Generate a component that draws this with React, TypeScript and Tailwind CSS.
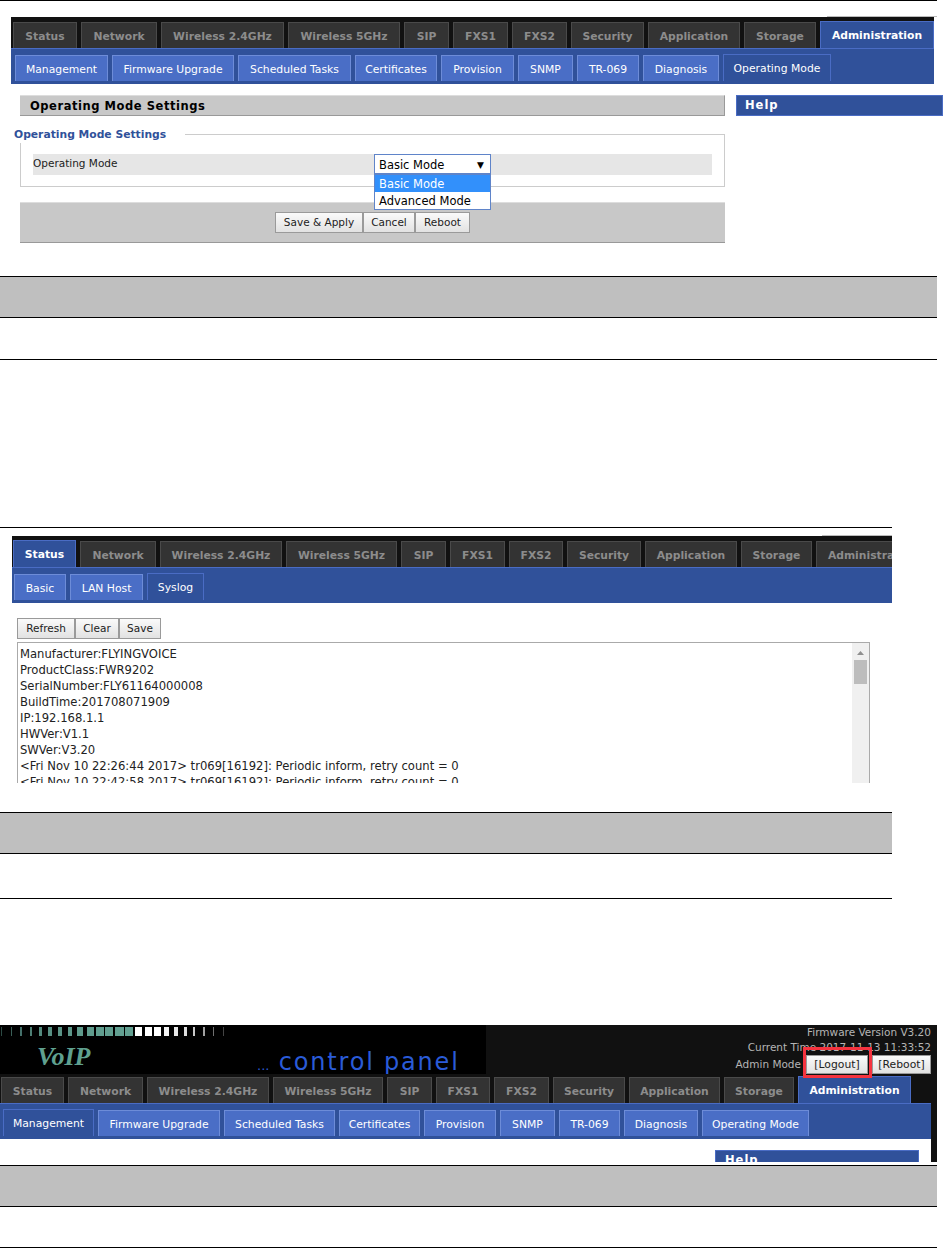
type Item = { label: string; width: string; active?: boolean };

const tabsA: Item[] = [
  { label: "Status", width: "w-[64px]" },
  { label: "Network", width: "w-[76px]" },
  { label: "Wireless 2.4GHz", width: "w-[123px]" },
  { label: "Wireless 5GHz", width: "w-[112px]" },
  { label: "SIP", width: "w-[45px]" },
  { label: "FXS1", width: "w-[55px]" },
  { label: "FXS2", width: "w-[55px]" },
  { label: "Security", width: "w-[73px]" },
  { label: "Application", width: "w-[92px]" },
  { label: "Storage", width: "w-[72px]" },
  { label: "Administration", width: "w-[114px]", active: true },
];

const tabsB: Item[] = [
  { label: "Status", width: "w-[63px]", active: true },
  { label: "Network", width: "w-[76px]" },
  { label: "Wireless 2.4GHz", width: "w-[122px]" },
  { label: "Wireless 5GHz", width: "w-[111px]" },
  { label: "SIP", width: "w-[45px]" },
  { label: "FXS1", width: "w-[55px]" },
  { label: "FXS2", width: "w-[54px]" },
  { label: "Security", width: "w-[74px]" },
  { label: "Application", width: "w-[92px]" },
  { label: "Storage", width: "w-[71px]" },
  { label: "Administration", width: "w-[114px]" },
];

const tabsC: Item[] = [
  { label: "Status", width: "w-[63px]" },
  { label: "Network", width: "w-[75px]" },
  { label: "Wireless 2.4GHz", width: "w-[122px]" },
  { label: "Wireless 5GHz", width: "w-[110px]" },
  { label: "SIP", width: "w-[45px]" },
  { label: "FXS1", width: "w-[54px]" },
  { label: "FXS2", width: "w-[55px]" },
  { label: "Security", width: "w-[72px]" },
  { label: "Application", width: "w-[91px]" },
  { label: "Storage", width: "w-[70px]" },
  { label: "Administration", width: "w-[113px]", active: true },
];

const subsA: Item[] = [
  { label: "Management", width: "w-[93px]" },
  { label: "Firmware Upgrade", width: "w-[122px]" },
  { label: "Scheduled Tasks", width: "w-[113px]" },
  { label: "Certificates", width: "w-[82px]" },
  { label: "Provision", width: "w-[73px]" },
  { label: "SNMP", width: "w-[55px]" },
  { label: "TR-069", width: "w-[62px]" },
  { label: "Diagnosis", width: "w-[76px]" },
  { label: "Operating Mode", width: "w-[108px]", active: true },
];

const subsB: Item[] = [
  { label: "Basic", width: "w-[52px]" },
  { label: "LAN Host", width: "w-[73px]" },
  { label: "Syslog", width: "w-[57px]", active: true },
];

const subsC: Item[] = [
  { label: "Management", width: "w-[91px]", active: true },
  { label: "Firmware Upgrade", width: "w-[122px]" },
  { label: "Scheduled Tasks", width: "w-[111px]" },
  { label: "Certificates", width: "w-[81px]" },
  { label: "Provision", width: "w-[72px]" },
  { label: "SNMP", width: "w-[55px]" },
  { label: "TR-069", width: "w-[61px]" },
  { label: "Diagnosis", width: "w-[74px]" },
  { label: "Operating Mode", width: "w-[107px]" },
];

const logLines = [
  "Manufacturer:FLYINGVOICE",
  "ProductClass:FWR9202",
  "SerialNumber:FLY61164000008",
  "BuildTime:201708071909",
  "IP:192.168.1.1",
  "HWVer:V1.1",
  "SWVer:V3.20",
  "<Fri Nov 10 22:26:44 2017> tr069[16192]: Periodic inform, retry count = 0",
  "<Fri Nov 10 22:42:58 2017> tr069[16192]: Periodic inform, retry count = 0",
];

// led strip of the banner: x, width, colour
const leds: [number, number, string][] = [
  [1, 1, "#2c4a44"], [11, 1, "#3a5f57"], [20, 2, "#44706a"], [30, 2, "#4d7f74"],
  [39, 3, "#538a7d"], [48, 4, "#578f82"], [58, 4, "#5a9385"], [68, 4, "#5c9688"],
  [77, 6, "#5e9a8b"], [87, 7, "#5f9c8d"], [96, 8, "#609e8f"], [105, 8, "#619f90"],
  [115, 9, "#62a091"], [125, 8, "#62a091"], [135, 7, "#ffffff"], [145, 7, "#ffffff"],
  [154, 7, "#ffffff"], [164, 5, "#f4f4f4"], [174, 4, "#e8e8e8"], [184, 3, "#dddddd"],
  [193, 2, "#c8c8c8"], [203, 2, "#a0a0a0"], [213, 1, "#707070"], [223, 1, "#444444"],
];

function TabRow({ items, className }: { items: Item[]; className: string }) {
  return (
    <div className={`flex h-[31px] items-end gap-[4px] bg-[#111111] ${className}`}>
      {items.map((t) => (
        <div
          key={t.label}
          className={`shrink-0 border-x border-t text-center text-[10.75px] font-bold whitespace-nowrap ${t.width} ${
            t.active
              ? "h-[27px] border-[#4a6cc4] bg-[#30519a] leading-[28px] text-white"
              : "h-[26px] border-[#4a4a4a] bg-[#333333] leading-[28px] text-[#8c8c8c]"
          }`}
        >
          {t.label}
        </div>
      ))}
    </div>
  );
}

function SubRow({ items, className }: { items: Item[]; className: string }) {
  return (
    <div className={`flex h-[36px] items-end gap-[4px] border-t border-[#4a6cc4] bg-[#30519a] pb-[3px] ${className}`}>
      {items.map((t) => (
        <div
          key={t.label}
          className={`shrink-0 border-x border-t text-center text-[10.8px] whitespace-nowrap text-white ${t.width} ${
            t.active
              ? "h-[27px] border-[#4a6cc4] bg-[#30519a] leading-[28px]"
              : "h-[26px] border-[#6d8cd8] bg-[#4a6ec6] leading-[27px]"
          }`}
        >
          {t.label}
        </div>
      ))}
    </div>
  );
}

function Btn({ label, width }: { label: string; width: string }) {
  return (
    <div className={`h-[21px] border border-[#9a9a9a] bg-gradient-to-b from-[#fafafa] to-[#e2e2e2] text-center text-[10.5px] leading-[18px] text-[#222222] ${width}`}>
      {label}
    </div>
  );
}

function DocTable({ className, lastRow }: { className: string; lastRow: string }) {
  return (
    <div className={`border-y border-black ${className}`}>
      <div className="h-[41px] border-b border-black bg-[#bfbfbf]" />
      <div className={lastRow} />
    </div>
  );
}

function SectionOne() {
  return (
    <section className="h-[360px]">
      <div className="h-px w-[937px] bg-black" />
      <div className="mt-[15px] ml-[827px] h-px w-[110px] bg-[#bbbbbb]" />
      <div className="ml-[11px] w-[923px]">
        <TabRow items={tabsA} className="pl-[2px]" />
        <SubRow items={subsA} className="pl-[4px]" />
      </div>
      <div className="mt-[11px] ml-[20px] flex gap-[11px]">
        <div className="w-[705px]">
          <div className="h-[21px] border-t border-r border-b border-t-[#dddddd] border-r-[#999999] border-b-[#999999] bg-[#c8c8c8] pl-[10px] text-[11.5px] leading-[20px] font-bold tracking-[0.55px] text-black">
            Operating Mode Settings
          </div>
          <div className="relative mt-[18px] h-[53px] border border-[#cccccc] px-[12px] pt-[19px]">
            <div className="absolute top-[-8px] left-[-7px] bg-white pr-[19px] text-[10.75px] leading-[16px] font-bold text-[#30519a]">
              Operating Mode Settings
            </div>
            <div className="relative h-[21px] bg-[#e6e6e6] text-[10.5px] leading-[19px] text-[#222222]">
              Operating Mode
              <div className="absolute top-0 left-[341px] flex h-[20px] w-[117px] items-center justify-between border border-[#5f84c9] bg-white pt-[2px] pr-[6px] pl-[4px] text-[11.5px] text-black">
                <span>Basic Mode</span>
                <span className="text-[9px]">▼</span>
              </div>
              <div className="absolute top-[20px] left-[341px] h-[36px] w-[117px] border border-[#5f84c9] bg-white text-[11.5px] text-black">
                <div className="h-[17px] bg-[#3290fb] pl-[4px] leading-[19px] text-white">Basic Mode</div>
                <div className="h-[17px] pl-[4px] leading-[19px]">Advanced Mode</div>
              </div>
            </div>
          </div>
          <div className="mt-[15px] flex h-[41px] justify-center border-t border-b border-t-[#dddddd] border-b-[#999999] bg-[#c8c8c8] pt-[9px]">
            <Btn label="Save & Apply" width="w-[88px]" />
            <Btn label="Cancel" width="w-[52px]" />
            <Btn label="Reboot" width="w-[55px]" />
          </div>
        </div>
        <div className="h-[21px] w-[207px] border border-[#4a6cc4] bg-[#30519a] pl-[8px] text-[11.5px] leading-[19px] font-bold tracking-[1px] text-white">
          Help
        </div>
      </div>
      <DocTable className="mt-[33px] w-[937px]" lastRow="h-[41px]" />
    </section>
  );
}

function SectionTwo() {
  return (
    <section className="mt-[167px] w-[892px]">
      <div className="h-px w-[892px] bg-black" />
      <div className="mt-[7px] ml-[822px] h-px w-[70px] bg-[#bbbbbb]" />
      <div className="ml-[12px] w-[880px] overflow-hidden">
        <TabRow items={tabsB} className="pl-px" />
        <SubRow items={subsB} className="pl-[2px]" />
      </div>
      <div className="mt-[15px] ml-[17px] flex h-[20px]">
        <Btn label="Refresh" width="w-[58px]" />
        <Btn label="Clear" width="w-[44px]" />
        <Btn label="Save" width="w-[42px]" />
      </div>
      <div className="mt-[4px] ml-[17px] flex h-[141px] w-[853px] overflow-hidden border-x border-t border-[#aaaaaa]">
        <div className="flex-1 pt-[3px] pl-[2px] text-[11.6px] leading-[16px] text-[#222222]">
          {logLines.map((l, i) => (
            <div key={i} className="whitespace-nowrap">{l}</div>
          ))}
        </div>
        <div className="w-[17px] bg-[#f0f0f0] pt-[6px]">
          <svg width="17" height="7" viewBox="0 0 17 7" className="block">
            <polygon points="5,6 8.5,2 12,6" fill="#8f8f8f" />
          </svg>
          <div className="mx-auto mt-[4px] h-[24px] w-[13px] bg-[#bdbdbd]" />
        </div>
      </div>
      <DocTable className="mt-[29px] w-[892px]" lastRow="h-[44px]" />
    </section>
  );
}

function SectionThree() {
  return (
    <section className="mt-[126px]">
      <div className="h-[137px] w-[937px] overflow-hidden bg-[#111111]">
        <div className="flex h-[49px] w-[931px]">
          <div className="h-[49px] w-[486px] shrink-0 overflow-hidden bg-black">
            <svg width="230" height="9" viewBox="0 0 230 9" className="mt-[2px] block">
              {leds.map(([x, w, c]) => (
                <rect key={x} x={x} y="0" width={w} height="9" fill={c} />
              ))}
            </svg>
            <div className="flex items-start whitespace-nowrap">
              <span className="mt-[7px] ml-[37px] w-[56px] font-['Liberation_Serif'] text-[26px] leading-[28px] font-bold text-[#5fa08f] italic">VoIP</span>
              <span className="mt-[14px] ml-[164px] font-['DejaVu_Sans'] text-[24px] leading-[24px] tracking-[1.8px] text-[#2a5bd7]">
                <span className="text-[13px] tracking-normal">...</span> control panel
              </span>
            </div>
          </div>
          <div className="flex-1 text-right text-[10.5px] leading-[15px] text-[#b5b5b5]">
            <div>Firmware Version V3.20</div>
            <div>Current Time 2017-11-13 11:33:52</div>
            <div className="relative -mt-[1px] flex h-[20px] items-center justify-end">
              <span className="mr-[5px]">Admin Mode</span>
              <div className="h-[19px] w-[62px] border border-[#999999] bg-gradient-to-b from-[#fafafa] to-[#e2e2e2] text-center text-[10.8px] leading-[17px] text-[#222222]">[Logout]</div>
              <div className="ml-[4px] h-[19px] w-[59px] border border-[#999999] bg-gradient-to-b from-[#fafafa] to-[#e2e2e2] text-center text-[10.8px] leading-[17px] text-[#222222]">[Reboot]</div>
              <div className="absolute top-[-7px] right-[59px] h-[31px] w-[69px] border-[3px] border-[#f5333f]" />
            </div>
          </div>
        </div>
        <div className="w-[931px]">
          <TabRow items={tabsC} className="-mt-[2px] bg-transparent pl-px" />
          <SubRow items={subsC} className="pl-[3px]" />
          <div className="h-[23px] bg-white pt-[11px]">
            <div className="ml-[715px] h-[21px] w-[204px] border border-[#4a6cc4] bg-[#30519a] pl-[9px] text-[11.5px] leading-[19px] font-bold tracking-[1px] text-white">
              Help
            </div>
          </div>
        </div>
      </div>
      <DocTable className="mt-[3px] w-[937px]" lastRow="h-[40px]" />
    </section>
  );
}

export default function App() {
  return (
    <div className="h-[1248px] w-[947px] overflow-hidden bg-white font-['DejaVu_Sans',sans-serif]">
      <SectionOne />
      <SectionTwo />
      <SectionThree />
    </div>
  );
}
